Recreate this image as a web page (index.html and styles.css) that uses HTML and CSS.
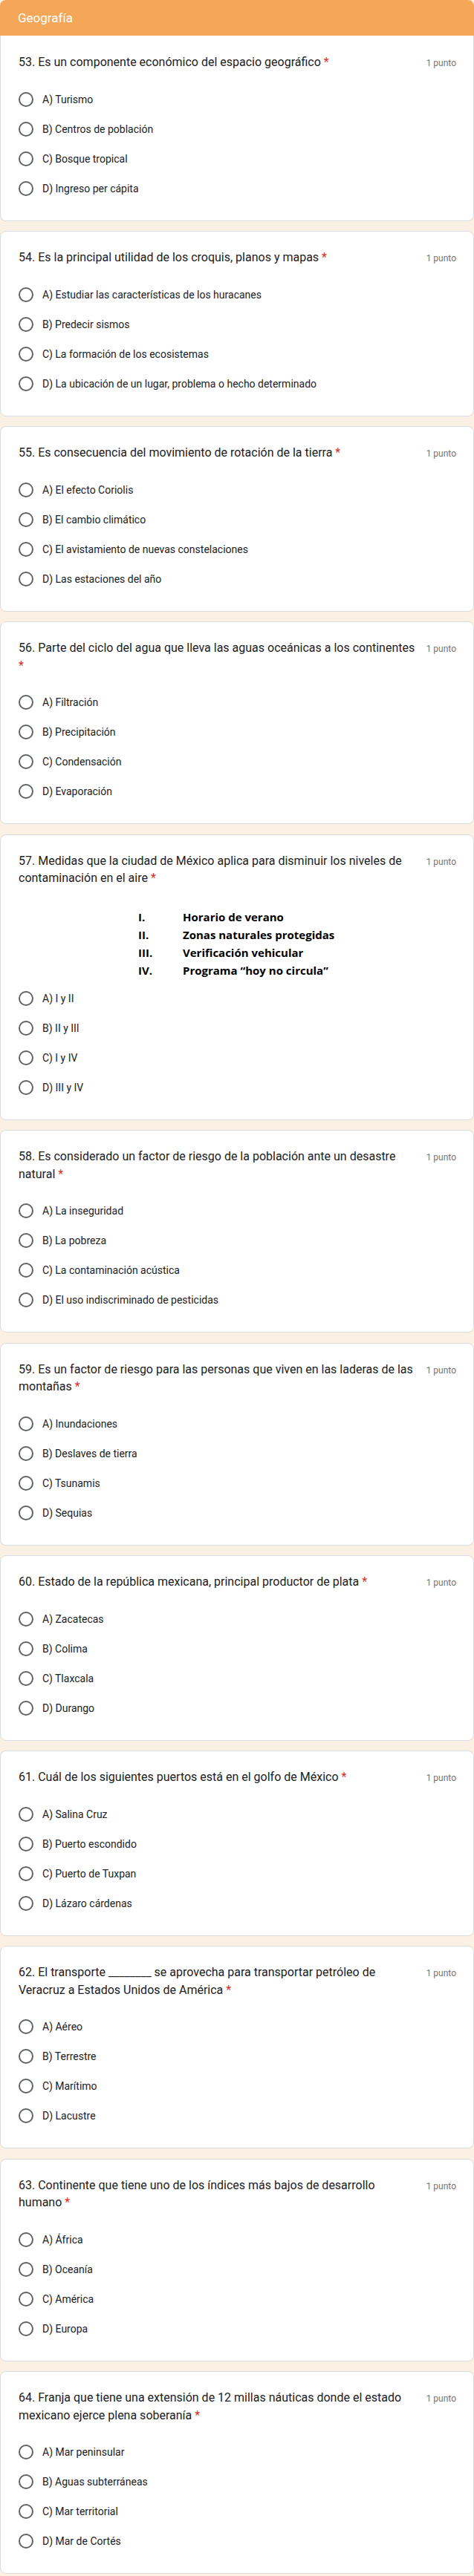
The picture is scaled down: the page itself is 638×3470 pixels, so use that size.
FILE: index.html
```html
<!DOCTYPE html>
<html lang="es">
<head>
<meta charset="utf-8">
<title>Geografía</title>
<link rel="stylesheet" href="styles.css">
</head>
<body>
<div class="page">
  <div class="section-header">Geografía</div>

  <div class="card card-first">
    <div class="q-head"><div class="q-title">53. Es un componente económico del espacio geográfico <span class="req">*</span></div><div class="q-points">1 punto</div></div>
    <div class="options">
      <div class="opt"><span class="radio"></span><span class="opt-label">A) Turismo</span></div>
      <div class="opt"><span class="radio"></span><span class="opt-label">B) Centros de población</span></div>
      <div class="opt"><span class="radio"></span><span class="opt-label">C) Bosque tropical</span></div>
      <div class="opt"><span class="radio"></span><span class="opt-label">D) Ingreso per cápita</span></div>
    </div>
  </div>

  <div class="card">
    <div class="q-head"><div class="q-title">54. Es la principal utilidad de los croquis, planos y mapas <span class="req">*</span></div><div class="q-points">1 punto</div></div>
    <div class="options">
      <div class="opt"><span class="radio"></span><span class="opt-label">A) Estudiar las características de los huracanes</span></div>
      <div class="opt"><span class="radio"></span><span class="opt-label">B) Predecir sismos</span></div>
      <div class="opt"><span class="radio"></span><span class="opt-label">C) La formación de los ecosistemas</span></div>
      <div class="opt"><span class="radio"></span><span class="opt-label">D) La ubicación de un lugar, problema o hecho determinado</span></div>
    </div>
  </div>

  <div class="card">
    <div class="q-head"><div class="q-title">55. Es consecuencia del movimiento de rotación de la tierra <span class="req">*</span></div><div class="q-points">1 punto</div></div>
    <div class="options">
      <div class="opt"><span class="radio"></span><span class="opt-label">A) El efecto Coriolis</span></div>
      <div class="opt"><span class="radio"></span><span class="opt-label">B) El cambio climático</span></div>
      <div class="opt"><span class="radio"></span><span class="opt-label">C) El avistamiento de nuevas constelaciones</span></div>
      <div class="opt"><span class="radio"></span><span class="opt-label">D) Las estaciones del año</span></div>
    </div>
  </div>

  <div class="card">
    <div class="q-head"><div class="q-title">56. Parte del ciclo del agua que lleva las aguas oceánicas a los continentes <span class="req">*</span></div><div class="q-points">1 punto</div></div>
    <div class="options">
      <div class="opt"><span class="radio"></span><span class="opt-label">A) Filtración</span></div>
      <div class="opt"><span class="radio"></span><span class="opt-label">B) Precipitación</span></div>
      <div class="opt"><span class="radio"></span><span class="opt-label">C) Condensación</span></div>
      <div class="opt"><span class="radio"></span><span class="opt-label">D) Evaporación</span></div>
    </div>
  </div>

  <div class="card">
    <div class="q-head"><div class="q-title">57. Medidas que la ciudad de México aplica para disminuir los niveles de contaminación en el aire <span class="req">*</span></div><div class="q-points">1 punto</div></div>
    <div class="figure">
      <div class="fig-row"><span class="fig-num">I.</span><span>Horario de verano</span></div>
      <div class="fig-row"><span class="fig-num">II.</span><span>Zonas naturales protegidas</span></div>
      <div class="fig-row"><span class="fig-num">III.</span><span>Verificación vehicular</span></div>
      <div class="fig-row"><span class="fig-num">IV.</span><span>Programa “hoy no circula”</span></div>
    </div>
    <div class="options options-after-figure">
      <div class="opt"><span class="radio"></span><span class="opt-label">A) I y II</span></div>
      <div class="opt"><span class="radio"></span><span class="opt-label">B) II y III</span></div>
      <div class="opt"><span class="radio"></span><span class="opt-label">C) I y IV</span></div>
      <div class="opt"><span class="radio"></span><span class="opt-label">D) III y IV</span></div>
    </div>
  </div>

  <div class="card">
    <div class="q-head"><div class="q-title">58. Es considerado un factor de riesgo de la población ante un desastre natural <span class="req">*</span></div><div class="q-points">1 punto</div></div>
    <div class="options">
      <div class="opt"><span class="radio"></span><span class="opt-label">A) La inseguridad</span></div>
      <div class="opt"><span class="radio"></span><span class="opt-label">B) La pobreza</span></div>
      <div class="opt"><span class="radio"></span><span class="opt-label">C) La contaminación acústica</span></div>
      <div class="opt"><span class="radio"></span><span class="opt-label">D) El uso indiscriminado de pesticidas</span></div>
    </div>
  </div>

  <div class="card">
    <div class="q-head"><div class="q-title">59. Es un factor de riesgo para las personas que viven en las laderas de las montañas <span class="req">*</span></div><div class="q-points">1 punto</div></div>
    <div class="options">
      <div class="opt"><span class="radio"></span><span class="opt-label">A) Inundaciones</span></div>
      <div class="opt"><span class="radio"></span><span class="opt-label">B) Deslaves de tierra</span></div>
      <div class="opt"><span class="radio"></span><span class="opt-label">C) Tsunamis</span></div>
      <div class="opt"><span class="radio"></span><span class="opt-label">D) Sequias</span></div>
    </div>
  </div>

  <div class="card">
    <div class="q-head"><div class="q-title">60. Estado de la república mexicana, principal productor de plata <span class="req">*</span></div><div class="q-points">1 punto</div></div>
    <div class="options">
      <div class="opt"><span class="radio"></span><span class="opt-label">A) Zacatecas</span></div>
      <div class="opt"><span class="radio"></span><span class="opt-label">B) Colima</span></div>
      <div class="opt"><span class="radio"></span><span class="opt-label">C) Tlaxcala</span></div>
      <div class="opt"><span class="radio"></span><span class="opt-label">D) Durango</span></div>
    </div>
  </div>

  <div class="card">
    <div class="q-head"><div class="q-title">61. Cuál de los siguientes puertos está en el golfo de México <span class="req">*</span></div><div class="q-points">1 punto</div></div>
    <div class="options">
      <div class="opt"><span class="radio"></span><span class="opt-label">A) Salina Cruz</span></div>
      <div class="opt"><span class="radio"></span><span class="opt-label">B) Puerto escondido</span></div>
      <div class="opt"><span class="radio"></span><span class="opt-label">C) Puerto de Tuxpan</span></div>
      <div class="opt"><span class="radio"></span><span class="opt-label">D) Lázaro cárdenas</span></div>
    </div>
  </div>

  <div class="card">
    <div class="q-head"><div class="q-title">62. El transporte ________ se aprovecha para transportar petróleo de Veracruz a Estados Unidos de América <span class="req">*</span></div><div class="q-points">1 punto</div></div>
    <div class="options">
      <div class="opt"><span class="radio"></span><span class="opt-label">A) Aéreo</span></div>
      <div class="opt"><span class="radio"></span><span class="opt-label">B) Terrestre</span></div>
      <div class="opt"><span class="radio"></span><span class="opt-label">C) Marítimo</span></div>
      <div class="opt"><span class="radio"></span><span class="opt-label">D) Lacustre</span></div>
    </div>
  </div>

  <div class="card">
    <div class="q-head"><div class="q-title">63. Continente que tiene uno de los índices más bajos de desarrollo humano <span class="req">*</span></div><div class="q-points">1 punto</div></div>
    <div class="options">
      <div class="opt"><span class="radio"></span><span class="opt-label">A) África</span></div>
      <div class="opt"><span class="radio"></span><span class="opt-label">B) Oceanía</span></div>
      <div class="opt"><span class="radio"></span><span class="opt-label">C) América</span></div>
      <div class="opt"><span class="radio"></span><span class="opt-label">D) Europa</span></div>
    </div>
  </div>

  <div class="card">
    <div class="q-head"><div class="q-title">64. Franja que tiene una extensión de 12 millas náuticas donde el estado mexicano ejerce plena soberanía <span class="req">*</span></div><div class="q-points">1 punto</div></div>
    <div class="options">
      <div class="opt"><span class="radio"></span><span class="opt-label">A) Mar peninsular</span></div>
      <div class="opt"><span class="radio"></span><span class="opt-label">B) Aguas subterráneas</span></div>
      <div class="opt"><span class="radio"></span><span class="opt-label">C) Mar territorial</span></div>
      <div class="opt"><span class="radio"></span><span class="opt-label">D) Mar de Cortés</span></div>
    </div>
  </div>
</div>
</body>
</html>
```

FILE: styles.css
```css
* {
  box-sizing: border-box;
}

html, body {
  margin: 0;
  padding: 0;
  background: #fbf0e4;
}

body {
  font-family: Roboto, "Noto Sans", Arial, sans-serif;
  color: #202124;
}

.page {
  display: flex;
  flex-direction: column;
  gap: 13.5px;
  width: 638px;
}

.section-header {
  height: 48px;
  background: #f4a758;
  color: #ffffff;
  font-size: 17px;
  line-height: 48px;
  padding-left: 24px;
  border-radius: 8px 8px 0 0;
  margin-bottom: -13.5px;
}

.card {
  background: #ffffff;
  border: 1px solid #dadce0;
  border-radius: 8px;
  padding: 23px 23px 23px 24px;
}

.card-first {
  border-top: none;
  border-radius: 0 0 8px 8px;
  padding-top: 24px;
}

.q-head {
  display: flex;
  align-items: baseline;
}

.q-title {
  flex: 1;
  font-size: 16px;
  line-height: 23.5px;
  color: #202124;
}

.req {
  color: #d93025;
}

.q-points {
  flex: none;
  margin-left: 14px;
  font-size: 12px;
  color: #70757a;
  white-space: nowrap;
}

.options {
  margin-top: 18px;
  display: flex;
  flex-direction: column;
}

.options-after-figure {
  margin-top: 6px;
}

.opt {
  height: 40px;
  display: flex;
  align-items: center;
  gap: 12px;
}

.radio {
  flex: none;
  width: 20px;
  height: 20px;
  border: 2px solid #5f6368;
  border-radius: 50%;
}

.opt-label {
  font-size: 14px;
  color: #202124;
}

.figure {
  padding-top: 28px;
  padding-left: 161px;
  font-family: "Open Sans", "Liberation Sans", sans-serif;
  font-weight: 700;
  font-size: 15px;
  color: #000000;
}

.fig-row {
  display: grid;
  grid-template-columns: 60px auto;
  height: 24px;
  line-height: 24px;
}
```
